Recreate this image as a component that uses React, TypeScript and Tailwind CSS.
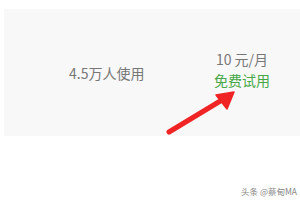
export default function App() {
  return (
    <div className="relative w-[300px] h-[200px] bg-white overflow-hidden" style={{ fontFamily: '"Noto Sans CJK SC", "Liberation Sans", sans-serif' }}>
      <div className="mt-[9px] ml-[4px] h-[127px] bg-[#f8f8f8] flex items-center">
        <div className="w-[140px] pl-[65px] text-[14px] text-[#777] whitespace-nowrap pt-[2px]">4.5万人使用</div>
        <div className="ml-[70px] flex flex-col items-center leading-[21px] -mt-[6px]">
          <span className="text-[14px] text-[#777]">10 元/月</span>
          <span className="text-[14px] text-[#45a845]">免费试用</span>
        </div>
      </div>
      <svg className="absolute left-0 top-0" width="300" height="200" viewBox="0 0 300 200">
        <line x1="169" y1="132" x2="222" y2="100" stroke="#f02424" strokeWidth="5" strokeLinecap="round" />
        <polygon points="234,92 216,95 227,109" fill="#f02424" stroke="#f02424" strokeWidth="1.5" strokeLinejoin="round" />
      </svg>
      <div className="absolute left-[241px] top-[185px] text-[8.5px] text-[#888] whitespace-nowrap">头条 @蔡甸MA</div>
    </div>
  );
}
